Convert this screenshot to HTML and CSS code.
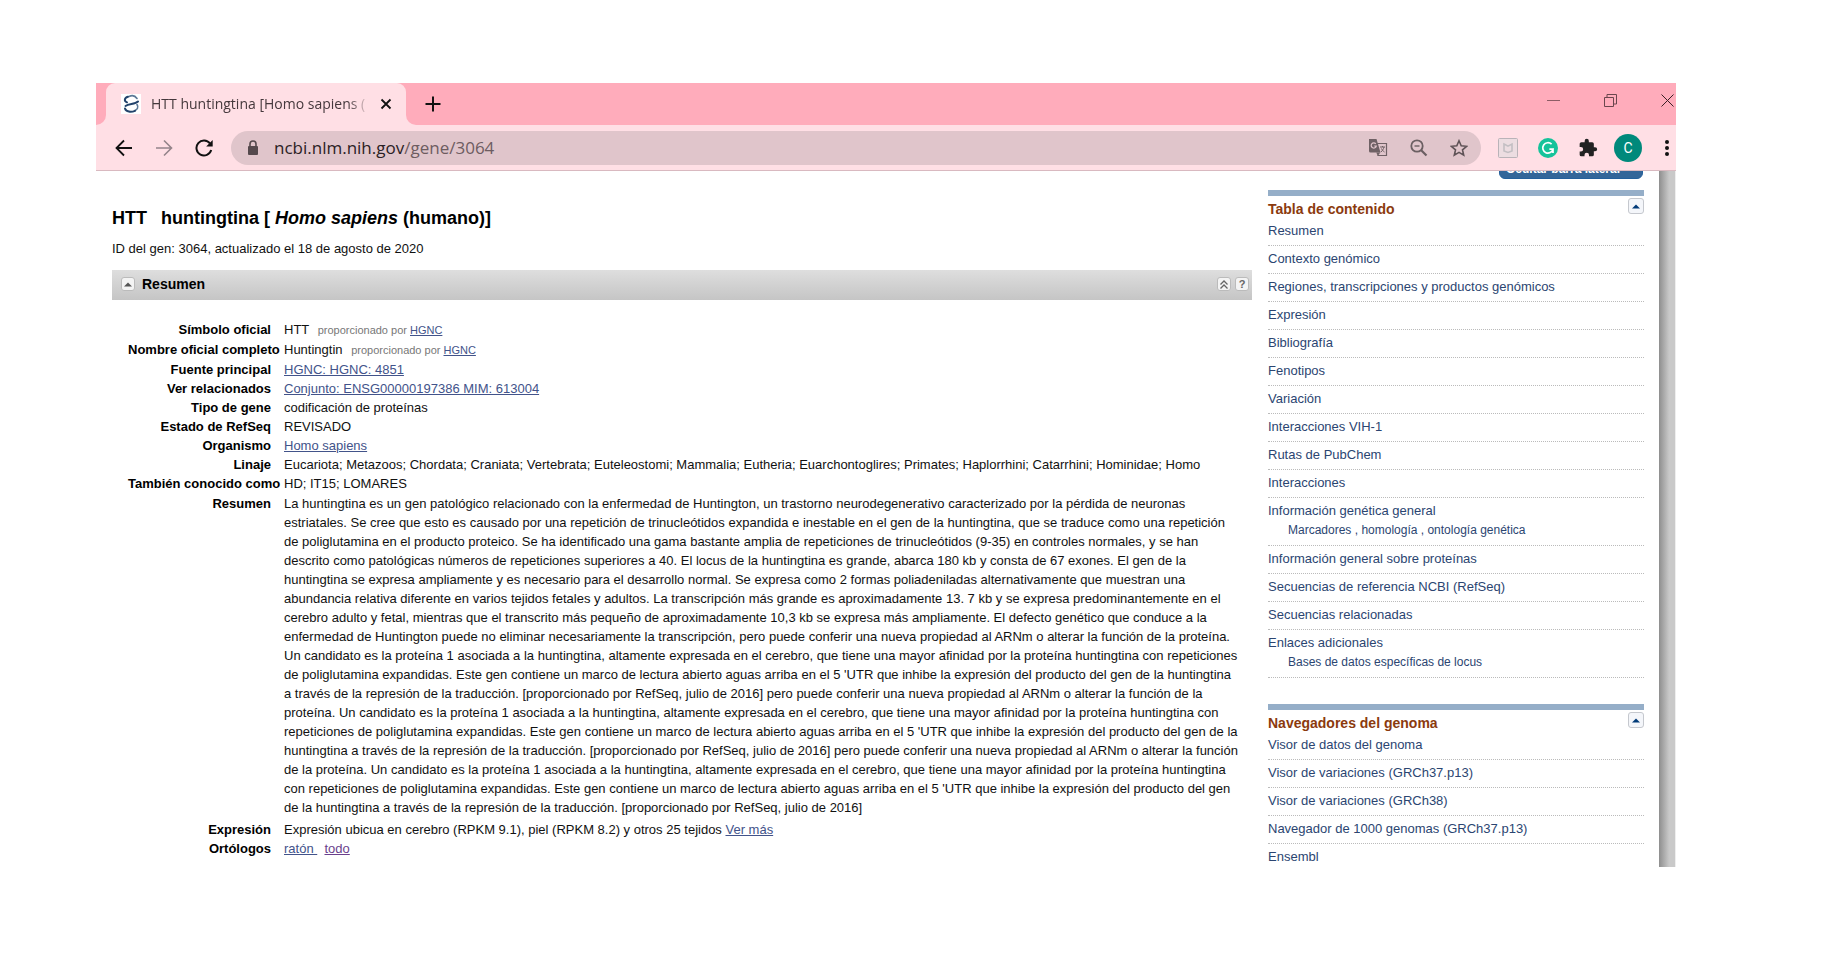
FILE: index.html
```html
<!DOCTYPE html>
<html lang="es">
<head>
<meta charset="utf-8">
<title>HTT huntingtina [Homo sapiens (humano)]</title>
<link rel="stylesheet" href="styles.css">
</head>
<body>
<div class="window">
  <header class="chrome">
    <div class="tabstrip">
      <div class="edge"></div>
      <div class="tab">
        <svg class="favicon" viewBox="0 0 20 20"><rect width="20" height="20" fill="#fff"/><g fill="none" stroke="#23436b" stroke-linecap="round"><path d="M8 2.500C11 1 14 1.500 16 4.500" stroke-width="1.600" stroke="#5c7896"/><path d="M7 2.800C3 4 3 7 6 8.300" stroke-width="2"/><path d="M4.500 12C8 9.500 14 10.500 17 7.500" stroke-width="2"/><path d="M16 10.500C18 13.500 16 15.500 14 16.500" stroke-width="1.600" stroke="#5c7896"/><path d="M4 14.500C5 18 10 18.500 14 16.800" stroke-width="2"/></g></svg>
        <span class="tab-title">HTT huntingtina [Homo sapiens (</span>
        <button class="icon-btn close" aria-label="Cerrar pestaña"><svg width="12" height="12" viewBox="0 0 12 12"><path d="M1.500 1.500l9 9M10.500 1.500l-9 9" stroke="#111" stroke-width="1.800"/></svg></button>
      </div>
      <button class="icon-btn newtab" aria-label="Nueva pestaña"><svg width="16" height="16" viewBox="0 0 16 16"><path d="M8 .5v15M.5 8h15" stroke="#111" stroke-width="2"/></svg></button>
      <div class="controls">
        <button class="icon-btn" aria-label="Minimizar"><svg width="13" height="13" viewBox="0 0 13 13"><path d="M0 6.500h13" stroke="#8d5c65"/></svg></button>
        <button class="icon-btn" aria-label="Restaurar"><svg width="13" height="13" viewBox="0 0 13 13"><path d="M.5 3.500h9v9h-9zM3 3V.5h9.500v9.500H10" fill="none" stroke="#6a464d"/></svg></button>
        <button class="icon-btn" aria-label="Cerrar"><svg width="13" height="13" viewBox="0 0 13 13"><path d="M.5.5l12 12M12.500.5l-12 12" stroke="#3a2025"/></svg></button>
      </div>
    </div>
    <div class="toolbar">
      <nav class="nav">
        <button class="icon-btn" aria-label="Atrás"><svg width="18" height="18" viewBox="0 0 18 18"><path d="M17 9H2M9 1.500L1.500 9 9 16.500" fill="none" stroke="#111" stroke-width="1.800"/></svg></button>
        <button class="icon-btn" aria-label="Adelante"><svg width="18" height="18" viewBox="0 0 18 18"><path d="M1 9h15M9 1.500L16.500 9 9 16.500" fill="none" stroke="#94848a" stroke-width="1.600"/></svg></button>
        <button class="icon-btn" aria-label="Recargar"><svg width="18" height="18" viewBox="0 0 18 18"><path d="M15 4.500A7.500 7.500 0 1 0 16.200 11" fill="none" stroke="#111" stroke-width="2"/><path d="M17.700 1v6.500H11.200z" fill="#111"/></svg></button>
      </nav>
      <div class="omnibox">
        <svg width="12" height="16" viewBox="0 0 12 16"><rect x="1" y="6" width="10" height="9" rx="1" fill="#55494d"/><path d="M3 6V4a3 3 0 0 1 6 0v2" fill="none" stroke="#55494d" stroke-width="1.600"/></svg>
        <span class="url">ncbi.nlm.nih.gov<span class="path">/gene/3064</span></span>
        <div class="omni-actions">
          <button class="icon-btn" aria-label="Traducir"><svg width="20" height="20" viewBox="0 0 20 20"><path d="M8 5.500h10.500v12H9.500" fill="none" stroke="#6f6165" stroke-width="1.200"/><path d="M1 1h7.500l4 13.500H2.500a1.500 1.500 0 0 1-1.500-1.500z" fill="#6f6165"/><path d="M8.300 14.500h4l-2.500 3.500z" fill="#6f6165"/><path d="M7.800 5.800a2.600 2.600 0 1 0 .5 2.200H6.200" fill="none" stroke="#e0c5cb" stroke-width="1.200"/><path d="M12 9h5M14.500 8v1M16 9c-.5 2-1.500 3.500-3 5M13.500 10.500c.5 1.500 1.500 2.500 3 3.500" fill="none" stroke="#6f6165"/></svg></button>
          <button class="icon-btn" aria-label="Zoom"><svg width="18" height="18" viewBox="0 0 18 18"><circle cx="7" cy="7" r="5.700" fill="none" stroke="#6b5f62" stroke-width="1.800"/><path d="M11 11l5.500 5.500" stroke="#6b5f62" stroke-width="2.200"/><path d="M4.500 7h5" stroke="#6b5f62" stroke-width="1.400"/></svg></button>
          <button class="icon-btn" aria-label="Favoritos"><svg width="18" height="18" viewBox="0 0 18 18"><path d="M9 1.800l2.200 5 5.400.5-4.100 3.600 1.200 5.300L9 13.400l-4.700 2.800 1.200-5.300L1.400 7.300l5.400-.5z" fill="none" stroke="#5f5357" stroke-width="1.600"/></svg></button>
        </div>
      </div>
      <div class="extensions">
        <button class="icon-btn" aria-label="McAfee"><svg width="20" height="20" viewBox="0 0 20 20"><rect x=".5" y=".5" width="19" height="19" rx="1" fill="#ecdde1" stroke="#b9b3b8"/><path d="M6 6l4 2.200L14 6v7l-4 1.500L6 13z" fill="none" stroke="#c3bfc3" stroke-width="1.600"/></svg></button>
        <button class="icon-btn" aria-label="Grammarly"><svg width="20" height="20" viewBox="0 0 20 20"><circle cx="10" cy="10" r="10" fill="#15c39a"/><path d="M13.600 6.200A5.200 5.200 0 1 0 15 11.200h-3.600M15 11v4" fill="none" stroke="#fff" stroke-width="1.700"/></svg></button>
        <button class="icon-btn" aria-label="Extensiones"><svg width="20" height="20" viewBox="0 0 24 24"><path fill="#222" d="M20.500 11H19V7a2 2 0 0 0-2-2h-4V3.500a2.500 2.500 0 0 0-5 0V5H4a2 2 0 0 0-2 2v3.800h1.500a2.700 2.700 0 0 1 0 5.400H2V20a2 2 0 0 0 2 2h3.800v-1.500a2.700 2.700 0 0 1 5.400 0V22H17a2 2 0 0 0 2-2v-4h1.500a2.500 2.500 0 0 0 0-5z"/></svg></button>
        <button class="avatar" aria-label="Perfil">C</button>
        <button class="icon-btn menu" aria-label="Menú"><svg width="4" height="16" viewBox="0 0 4 16"><g fill="#111"><circle cx="2" cy="2" r="2"/><circle cx="2" cy="8" r="2"/><circle cx="2" cy="14" r="2"/></g></svg></button>
      </div>
    </div>
  </header>

  <div class="page">
    <main class="content">
      <h1>HTT<span class="name">huntingtina [ <em>Homo sapiens</em> (humano)]</span></h1>
      <p class="gene-id">ID del gen: 3064, actualizado el 18 de agosto de 2020</p>
      <div class="section-bar">
        <button class="mini" aria-label="Contraer"><svg width="8" height="5" viewBox="0 0 8 5"><path d="M0 4.500L4 .5l4 4z" fill="#555"/></svg></button>
        <h2>Resumen</h2>
        <button class="mini" aria-label="Subir"><svg width="8" height="9" viewBox="0 0 8 9"><path d="M.5 4.500L4 1l3.500 3.500M.5 8.500L4 5l3.500 3.500" fill="none" stroke="#666" stroke-width="1.300"/></svg></button>
        <button class="mini help" aria-label="Ayuda">?</button>
      </div>
      <dl class="summary">
        <dt>Símbolo oficial</dt><dd>HTT <small>proporcionado por <a href="#">HGNC</a></small></dd>
        <dt>Nombre oficial completo</dt><dd>Huntingtin <small>proporcionado por <a href="#">HGNC</a></small></dd>
        <dt>Fuente principal</dt><dd><a href="#">HGNC: HGNC: 4851</a></dd>
        <dt>Ver relacionados</dt><dd><a href="#">Conjunto: ENSG00000197386 MIM: 613004</a></dd>
        <dt>Tipo de gene</dt><dd>codificación de proteínas</dd>
        <dt>Estado de RefSeq</dt><dd>REVISADO</dd>
        <dt>Organismo</dt><dd><a href="#">Homo sapiens</a></dd>
        <dt>Linaje</dt><dd>Eucariota; Metazoos; Chordata; Craniata; Vertebrata; Euteleostomi; Mammalia; Eutheria; Euarchontoglires; Primates; Haplorrhini; Catarrhini; Hominidae; Homo</dd>
        <dt>También conocido como</dt><dd>HD; IT15; LOMARES</dd>
        <dt class="long">Resumen</dt><dd class="long">La huntingtina es un gen patológico relacionado con la enfermedad de Huntington, un trastorno neurodegenerativo caracterizado por la pérdida de neuronas<br>
estriatales. Se cree que esto es causado por una repetición de trinucleótidos expandida e inestable en el gen de la huntingtina, que se traduce como una repetición<br>
de poliglutamina en el producto proteico. Se ha identificado una gama bastante amplia de repeticiones de trinucleótidos (9-35) en controles normales, y se han<br>
descrito como patológicas números de repeticiones superiores a 40. El locus de la huntingtina es grande, abarca 180 kb y consta de 67 exones. El gen de la<br>
huntingtina se expresa ampliamente y es necesario para el desarrollo normal. Se expresa como 2 formas poliadeniladas alternativamente que muestran una<br>
abundancia relativa diferente en varios tejidos fetales y adultos. La transcripción más grande es aproximadamente 13. 7 kb y se expresa predominantemente en el<br>
cerebro adulto y fetal, mientras que el transcrito más pequeño de aproximadamente 10,3 kb se expresa más ampliamente. El defecto genético que conduce a la<br>
enfermedad de Huntington puede no eliminar necesariamente la transcripción, pero puede conferir una nueva propiedad al ARNm o alterar la función de la proteína.<br>
Un candidato es la proteína 1 asociada a la huntingtina, altamente expresada en el cerebro, que tiene una mayor afinidad por la proteína huntingtina con repeticiones<br>
de poliglutamina expandidas. Este gen contiene un marco de lectura abierto aguas arriba en el 5 'UTR que inhibe la expresión del producto del gen de la huntingtina<br>
a través de la represión de la traducción. [proporcionado por RefSeq, julio de 2016] pero puede conferir una nueva propiedad al ARNm o alterar la función de la<br>
proteína. Un candidato es la proteína 1 asociada a la huntingtina, altamente expresada en el cerebro, que tiene una mayor afinidad por la proteína huntingtina con<br>
repeticiones de poliglutamina expandidas. Este gen contiene un marco de lectura abierto aguas arriba en el 5 'UTR que inhibe la expresión del producto del gen de la<br>
huntingtina a través de la represión de la traducción. [proporcionado por RefSeq, julio de 2016] pero puede conferir una nueva propiedad al ARNm o alterar la función<br>
de la proteína. Un candidato es la proteína 1 asociada a la huntingtina, altamente expresada en el cerebro, que tiene una mayor afinidad por la proteína huntingtina<br>
con repeticiones de poliglutamina expandidas. Este gen contiene un marco de lectura abierto aguas arriba en el 5 'UTR que inhibe la expresión del producto del gen<br>
de la huntingtina a través de la represión de la traducción. [proporcionado por RefSeq, julio de 2016]</dd>
        <dt>Expresión</dt><dd>Expresión ubicua en cerebro (RPKM 9.1), piel (RPKM 8.2) y otros 25 tejidos <a href="#">Ver más</a></dd>
        <dt>Ortólogos</dt><dd><a href="#">ratón&nbsp;</a>&nbsp; <a class="visited" href="#">todo</a></dd>
      </dl>
    </main>
    <aside class="sidebar">
      <button class="hide-bar">Ocultar barra lateral</button>
      <section class="panel">
        <div class="panel-head"><h3>Tabla de contenido</h3><button class="mini blue" aria-label="Contraer"><svg width="8" height="5" viewBox="0 0 8 5"><path d="M0 4.500L4 .5l4 4z" fill="#003a78"/></svg></button></div>
        <ul>
          <li><a href="#">Resumen</a></li>
          <li><a href="#">Contexto genómico</a></li>
          <li><a href="#">Regiones, transcripciones y productos genómicos</a></li>
          <li><a href="#">Expresión</a></li>
          <li><a href="#">Bibliografía</a></li>
          <li><a href="#">Fenotipos</a></li>
          <li><a href="#">Variación</a></li>
          <li><a href="#">Interacciones VIH-1</a></li>
          <li><a href="#">Rutas de PubChem</a></li>
          <li><a href="#">Interacciones</a></li>
          <li><a href="#">Información genética general</a><div class="sub"><a href="#">Marcadores</a> , <a href="#">homología</a> , <a href="#">ontología genética</a></div></li>
          <li><a href="#">Información general sobre proteínas</a></li>
          <li><a href="#">Secuencias de referencia NCBI (RefSeq)</a></li>
          <li><a href="#">Secuencias relacionadas</a></li>
          <li><a href="#">Enlaces adicionales</a><div class="sub"><a href="#">Bases de datos específicas de locus</a></div></li>
        </ul>
      </section>
      <section class="panel">
        <div class="panel-head"><h3>Navegadores del genoma</h3><button class="mini blue" aria-label="Contraer"><svg width="8" height="5" viewBox="0 0 8 5"><path d="M0 4.500L4 .5l4 4z" fill="#003a78"/></svg></button></div>
        <ul>
          <li><a href="#">Visor de datos del genoma</a></li>
          <li><a href="#">Visor de variaciones (GRCh37.p13)</a></li>
          <li><a href="#">Visor de variaciones (GRCh38)</a></li>
          <li><a href="#">Navegador de 1000 genomas (GRCh37.p13)</a></li>
          <li class="last"><a href="#">Ensembl</a></li>
        </ul>
      </section>
    </aside>
    <div class="gutter"></div>
  </div>
</div>
</body>
</html>
```
FILE: styles.css
```css
* { box-sizing: border-box; }
body { margin: 0; padding: 83px 150px 0 96px; background: #fff; color: #111; font: 13px/19px "Liberation Sans", Arial, sans-serif; }
h1, h2, h3, p, ul, dl, dd { margin: 0; padding: 0; }
button { margin: 0; padding: 0; border: 0; background: none; font: inherit; color: inherit; }
svg { display: block; flex: none; }
.window { overflow: hidden; }

.chrome { position: relative; font-family: "Open Sans", "Noto Sans", sans-serif; background: #ffdfe5; border-bottom: 1px solid #d9b9c0; }
.tabstrip { display: flex; height: 42px; background: linear-gradient(#ffdfe5, #ffdfe5) 0 100% / 330px 10px no-repeat #ffacbb; }
.edge { width: 10px; background: #ffacbb; border-bottom-right-radius: 10px; }
.tab { display: flex; align-items: center; width: 300px; padding: 0 14px 1px 15px; background: #ffdfe5; border-radius: 9px 9px 0 0; }
.favicon { width: 20px; height: 20px; }
.tab-title { flex: 1; min-width: 0; margin: 0 10px; white-space: nowrap; font-size: 14px; color: #45383c; mask-image: linear-gradient(90deg, #000 90%, transparent); }
.newtab { width: 54px; display: grid; place-items: center; background: #ffacbb; border-bottom-left-radius: 10px; }
.controls { display: flex; gap: 44px; margin: 11px 2px 0 auto; align-items: start; }
.toolbar { display: flex; align-items: center; height: 45px; padding: 1px 7px 0 19px; }
.nav { display: flex; gap: 22px; }
.omnibox { flex: 1; display: flex; align-items: center; height: 34px; margin: 0 17px 0 18px; padding: 0 13px 0 16px; border-radius: 17px; background: #e0c5cb; }
.url { margin-left: 15px; font-size: 17px; line-height: 24px; color: #2b2124; }
.path { color: #6d5c61; }
.omni-actions { display: flex; gap: 22px; margin-left: auto; align-items: center; }
.extensions { display: flex; gap: 20px; align-items: center; }
.avatar { width: 28px; height: 28px; margin: 0 -4px; border-radius: 50%; background: #00897b; color: #fff; font: 14px/28px Roboto, sans-serif; text-align: center; }
.menu { margin-left: 7px; }

.page { display: flex; }
.content { flex: 1; min-width: 0; padding: 36px 0 0 16px; }
h1 { font-size: 18px; line-height: 22px; color: #000; white-space: nowrap; }
.name { margin-left: 14px; }
.gene-id { margin-top: 10px; line-height: 20px; }
.section-bar { display: flex; align-items: center; gap: 4px; height: 30px; margin: 11px 0 20px; padding: 0 3px 2px 9px; background: linear-gradient(#dedede, #c5c5c5); }
h2 { flex: 1; margin-left: 3px; font-size: 14px; color: #000; }
.mini { display: grid; place-items: center; width: 14px; height: 14px; border: 1px solid #bbb; border-radius: 3px; background: #f4f4f4; }
.help { font-size: 11px; line-height: 12px; font-weight: bold; color: #666; }
.summary { display: grid; grid-template-columns: 143px 1fr; column-gap: 13px; padding-left: 16px; white-space: nowrap; }
dt { font-weight: bold; text-align: right; color: #000; }
.summary a { color: #42538a; }
.summary a.visited { color: #6a3f8c; }
small { margin-left: 5px; font-size: 11px; color: #777; }
.long { padding: 1px 0 3px; }

.sidebar { width: 376px; margin: 0 15px 0 16px; }
.hide-bar { display: block; height: 24px; width: 144px; margin: -16px 1px 11px auto; padding: 4px 16px 0 0; border-radius: 6px; border: 1px solid #23609c; background: #369; color: #fff; font-size: 12px; font-weight: bold; line-height: 18px; white-space: nowrap; }
.panel { border-top: 6px solid #95aec8; margin-bottom: 26px; }
.panel:last-child { margin-bottom: 0; }
.panel-head { display: flex; justify-content: space-between; padding-top: 2px; height: 22px; }
h3 { padding-top: 2px; font-size: 14px; line-height: 18px; color: #8b3a0e; }
.blue { width: 16px; height: 16px; background: #f4f6fa; border-color: #c5c8ce; }
ul { list-style: none; }
li { padding: 3px 0 5px; border-bottom: 1px dotted #bbb; }
.last { border: 0; padding-bottom: 1px; }
.sidebar a { color: #2b4571; text-decoration: none; }
.sub { padding-left: 20px; font-size: 12px; line-height: 20px; color: #2b4571; word-spacing: normal; }
.gutter { width: 17px; background: linear-gradient(90deg, #8e8e8e, #c9c9c9 60%, #c9c9c9 92%, #eee 94%); }
```
